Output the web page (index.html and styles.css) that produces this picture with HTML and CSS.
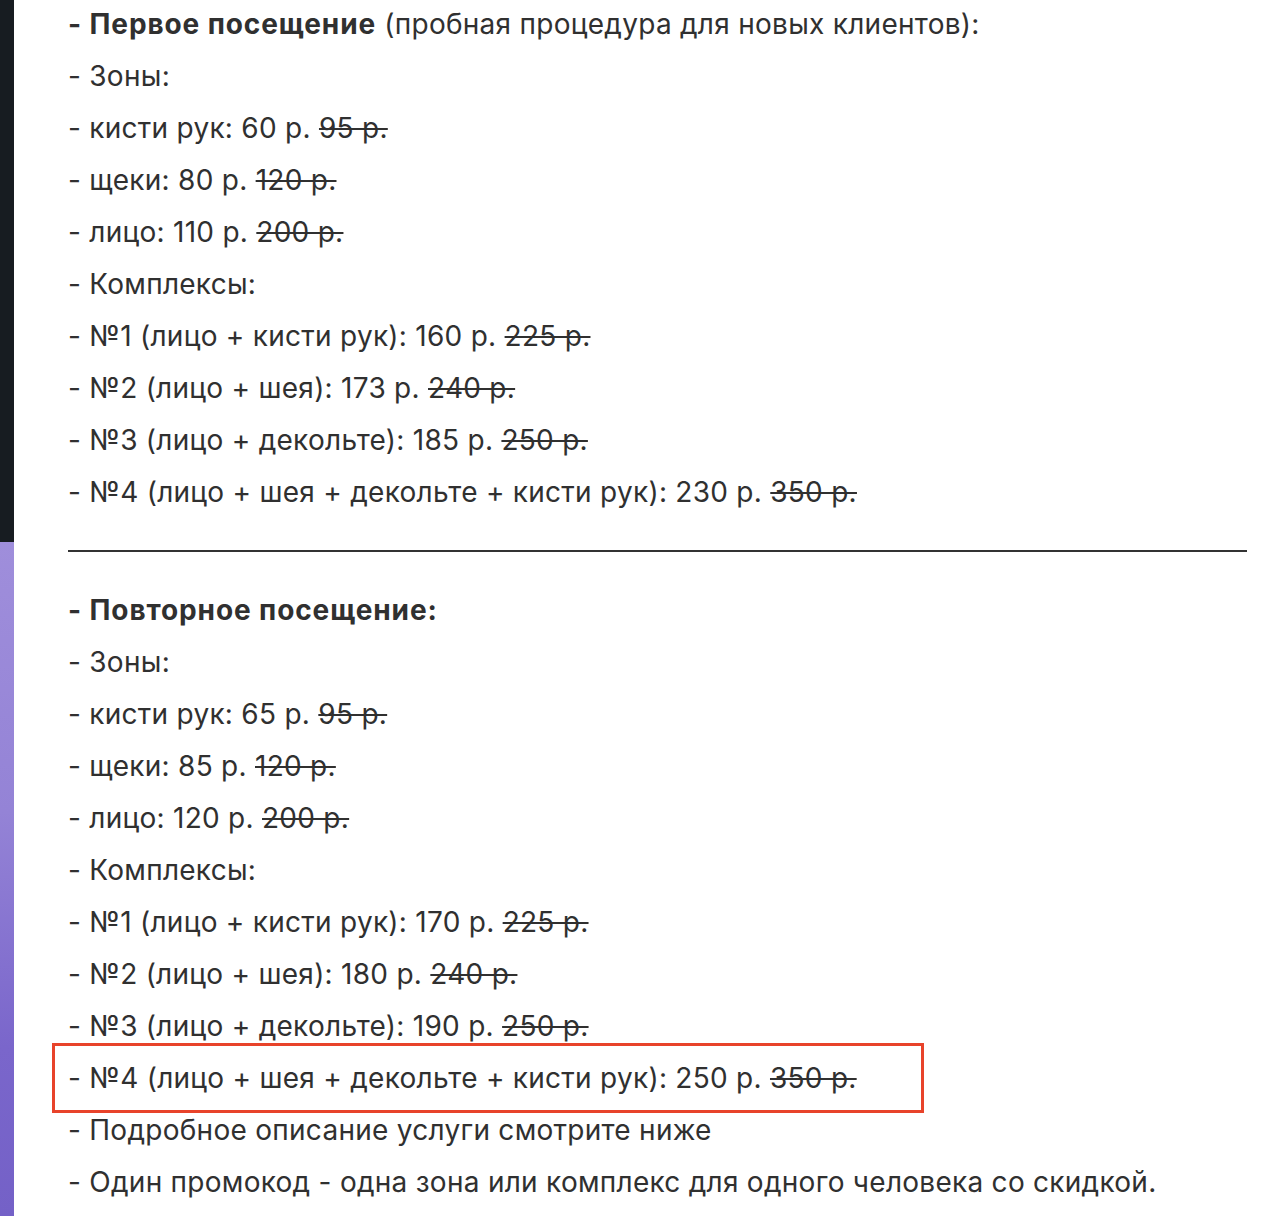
FILE: index.html
```html
<!DOCTYPE html>
<html lang="ru">
<head>
<meta charset="utf-8">
<link rel="stylesheet" href="styles.css">
</head>
<body>
<div class="page">
  <aside class="strip">
    <div class="strip-dark"></div>
    <div class="strip-purple"></div>
  </aside>
  <main class="content">
    <p class="line"><b>- Первое посещение</b> (пробная процедура для новых клиентов):</p>
    <p class="line">- Зоны:</p>
    <p class="line">- кисти рук: 60 р. <s>95 р.</s></p>
    <p class="line">- щеки: 80 р. <s>120 р.</s></p>
    <p class="line">- лицо: 110 р. <s>200 р.</s></p>
    <p class="line">- Комплексы:</p>
    <p class="line">- №1 (лицо + кисти рук): 160 р. <s>225 р.</s></p>
    <p class="line">- №2 (лицо + шея): 173 р. <s>240 р.</s></p>
    <p class="line">- №3 (лицо + декольте): 185 р. <s>250 р.</s></p>
    <p class="line">- №4 (лицо + шея + декольте + кисти рук): 230 р. <s>350 р.</s></p>
    <hr class="divider">
    <p class="line"><b>- Повторное посещение:</b></p>
    <p class="line">- Зоны:</p>
    <p class="line">- кисти рук: 65 р. <s>95 р.</s></p>
    <p class="line">- щеки: 85 р. <s>120 р.</s></p>
    <p class="line">- лицо: 120 р. <s>200 р.</s></p>
    <p class="line">- Комплексы:</p>
    <p class="line">- №1 (лицо + кисти рук): 170 р. <s>225 р.</s></p>
    <p class="line">- №2 (лицо + шея): 180 р. <s>240 р.</s></p>
    <p class="line">- №3 (лицо + декольте): 190 р. <s>250 р.</s></p>
    <div class="highlight">
      <p class="line">- №4 (лицо + шея + декольте + кисти рук): 250 р. <s>350 р.</s></p>
    </div>
    <p class="line">- Подробное описание услуги смотрите ниже</p>
    <p class="line">- Один промокод - одна зона или комплекс для одного человека со скидкой.</p>
  </main>
</div>
</body>
</html>
```
FILE: styles.css
```css
html, body {
  margin: 0;
  padding: 0;
  background: #ffffff;
}
.page {
  display: flex;
  width: 1268px;
  height: 1216px;
  overflow: hidden;
}
.strip {
  width: 14px;
  flex: none;
  display: flex;
  flex-direction: column;
}
.strip-dark {
  height: 542px;
  background: #171c21;
}
.strip-purple {
  flex: 1;
  background: linear-gradient(180deg, #9f8edb 0%, #9483d6 40%, #7a66cb 75%, #7461c7 100%);
}
.content {
  flex: 1;
  padding: 0 21px 0 54px;
  margin-top: -2px;
  font-family: Inter, "Noto Sans", sans-serif;
  font-size: 28px;
  letter-spacing: 0.27px;
  color: #303030;
}
.line {
  margin: 0;
  line-height: 52px;
  white-space: nowrap;
}
.line b {
  font-weight: 700;
  letter-spacing: 0.9px;
}
.line s {
  text-decoration-thickness: 2px;
}
.divider {
  border: 0;
  border-top: 2px solid #333333;
  margin: 32px 0 32px 0;
}
.highlight {
  box-sizing: border-box;
  width: 872px;
  margin: -9px 0 -9px -16px;
  padding: 6px 13px;
  border: 3px solid #e8432a;
}
```
